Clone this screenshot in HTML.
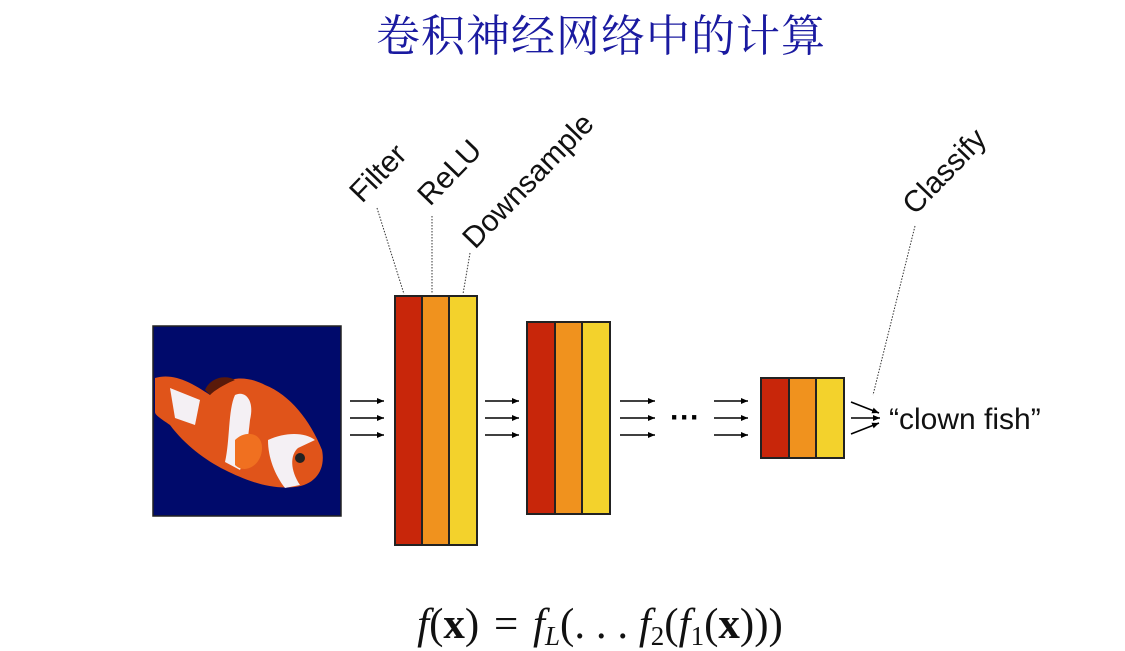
<!DOCTYPE html>
<html><head><meta charset="utf-8"><style>
html,body{margin:0;padding:0;background:#fff;}
svg{display:block}
</style></head><body>
<svg width="1125" height="651" viewBox="0 0 1125 651" xmlns="http://www.w3.org/2000/svg">
<defs>
<marker id="ah" markerWidth="8" markerHeight="8" refX="7" refY="3" orient="auto" markerUnits="userSpaceOnUse">
<path d="M0,0 L7,3 L0,6 z" fill="#000"/></marker>
</defs>
<text x="601" y="51" text-anchor="middle" font-family="'Noto Serif CJK SC','Liberation Serif',serif" font-size="44" fill="#1a1aa0" letter-spacing="1">卷积神经网络中的计算</text>

<rect x="153" y="326" width="188" height="190" fill="#000a6b" stroke="#222" stroke-width="1.5"/>
<g>
<path d="M155,378 C175,372 195,385 210,395 C220,380 240,372 265,385 C290,395 310,420 322,450 C326,470 315,485 295,487 C270,490 245,480 225,470 C205,460 185,445 170,425 C160,418 155,415 155,412 Z" fill="#e0541a"/>
<path d="M170,388 L200,400 L195,425 L175,418 Z" fill="#f4f0f4"/>
<path d="M235,395 C245,390 255,400 250,420 C248,440 245,460 240,470 L225,462 C230,440 228,410 235,395 Z" fill="#f4f0f4"/>
<path d="M268,440 C285,432 305,432 315,440 L298,448 C290,455 290,470 300,485 L285,488 C275,475 268,458 268,440 Z" fill="#f4f0f4"/>
<circle cx="300" cy="458" r="5" fill="#222"/>
<path d="M205,390 C210,378 225,374 235,380 C225,384 215,390 210,395 Z" fill="#5a1a0a"/>
<path d="M235,440 C245,430 262,432 262,448 C262,465 245,475 235,465 Z" fill="#f07020"/>
</g>

<g stroke="#222" stroke-width="2">
<rect x="395" y="296" width="27" height="249" fill="#c8260a"/>
<rect x="422" y="296" width="27" height="249" fill="#f0921e"/>
<rect x="449" y="296" width="28" height="249" fill="#f3d22c"/>
<rect x="527" y="322" width="28" height="192" fill="#c8260a"/>
<rect x="555" y="322" width="27" height="192" fill="#f0921e"/>
<rect x="582" y="322" width="28" height="192" fill="#f3d22c"/>
<rect x="761" y="378" width="28" height="80" fill="#c8260a"/>
<rect x="789" y="378" width="27" height="80" fill="#f0921e"/>
<rect x="816" y="378" width="28" height="80" fill="#f3d22c"/>
</g>

<g stroke="#000" stroke-width="1.6" marker-end="url(#ah)">
<line x1="350" y1="401" x2="384" y2="401"/><line x1="350" y1="418" x2="384" y2="418"/><line x1="350" y1="435" x2="384" y2="435"/>
<line x1="485" y1="401" x2="519" y2="401"/><line x1="485" y1="418" x2="519" y2="418"/><line x1="485" y1="435" x2="519" y2="435"/>
<line x1="620" y1="401" x2="655" y2="401"/><line x1="620" y1="418" x2="655" y2="418"/><line x1="620" y1="435" x2="655" y2="435"/>
<line x1="714" y1="401" x2="748" y2="401"/><line x1="714" y1="418" x2="748" y2="418"/><line x1="714" y1="435" x2="748" y2="435"/>
<line x1="851" y1="402" x2="879" y2="413"/><line x1="851" y1="418" x2="880" y2="418"/><line x1="851" y1="434" x2="879" y2="423"/>
</g>
<text x="670" y="427" font-family="'Liberation Sans',sans-serif" font-size="30" font-weight="bold">···</text>

<text x="889" y="429" font-family="'Liberation Sans',sans-serif" font-size="30" fill="#111">“clown fish”</text>

<g font-family="'Liberation Sans',sans-serif" font-size="30" fill="#111">
<text transform="translate(362,204) rotate(-46)">Filter</text>
<text transform="translate(430,207) rotate(-46)">ReLU</text>
<text transform="translate(475,250) rotate(-46)">Downsample</text>
<text transform="translate(915,216) rotate(-46)">Classify</text>
</g>
<g stroke="#333" stroke-width="1" stroke-dasharray="1.5,1.5" fill="none">
<line x1="377" y1="208" x2="404" y2="294"/>
<line x1="432" y1="216" x2="432" y2="294"/>
<line x1="470" y1="253" x2="463" y2="294"/>
<line x1="915" y1="226" x2="873" y2="395"/>
</g>

<text x="600" y="638" text-anchor="middle" font-family="'Liberation Serif',serif" font-size="43" fill="#111"><tspan font-style="italic">f</tspan>(<tspan font-weight="bold">x</tspan>) <tspan dx="4">=</tspan><tspan dx="4"> </tspan><tspan font-style="italic">f</tspan><tspan font-style="italic" font-size="27" dy="7">L</tspan><tspan dy="-7">(. . . </tspan><tspan font-style="italic">f</tspan><tspan font-size="27" dy="7">2</tspan><tspan dy="-7">(</tspan><tspan font-style="italic">f</tspan><tspan font-size="27" dy="7">1</tspan><tspan dy="-7">(</tspan><tspan font-weight="bold">x</tspan>)))</text>
</svg>
</body></html>
